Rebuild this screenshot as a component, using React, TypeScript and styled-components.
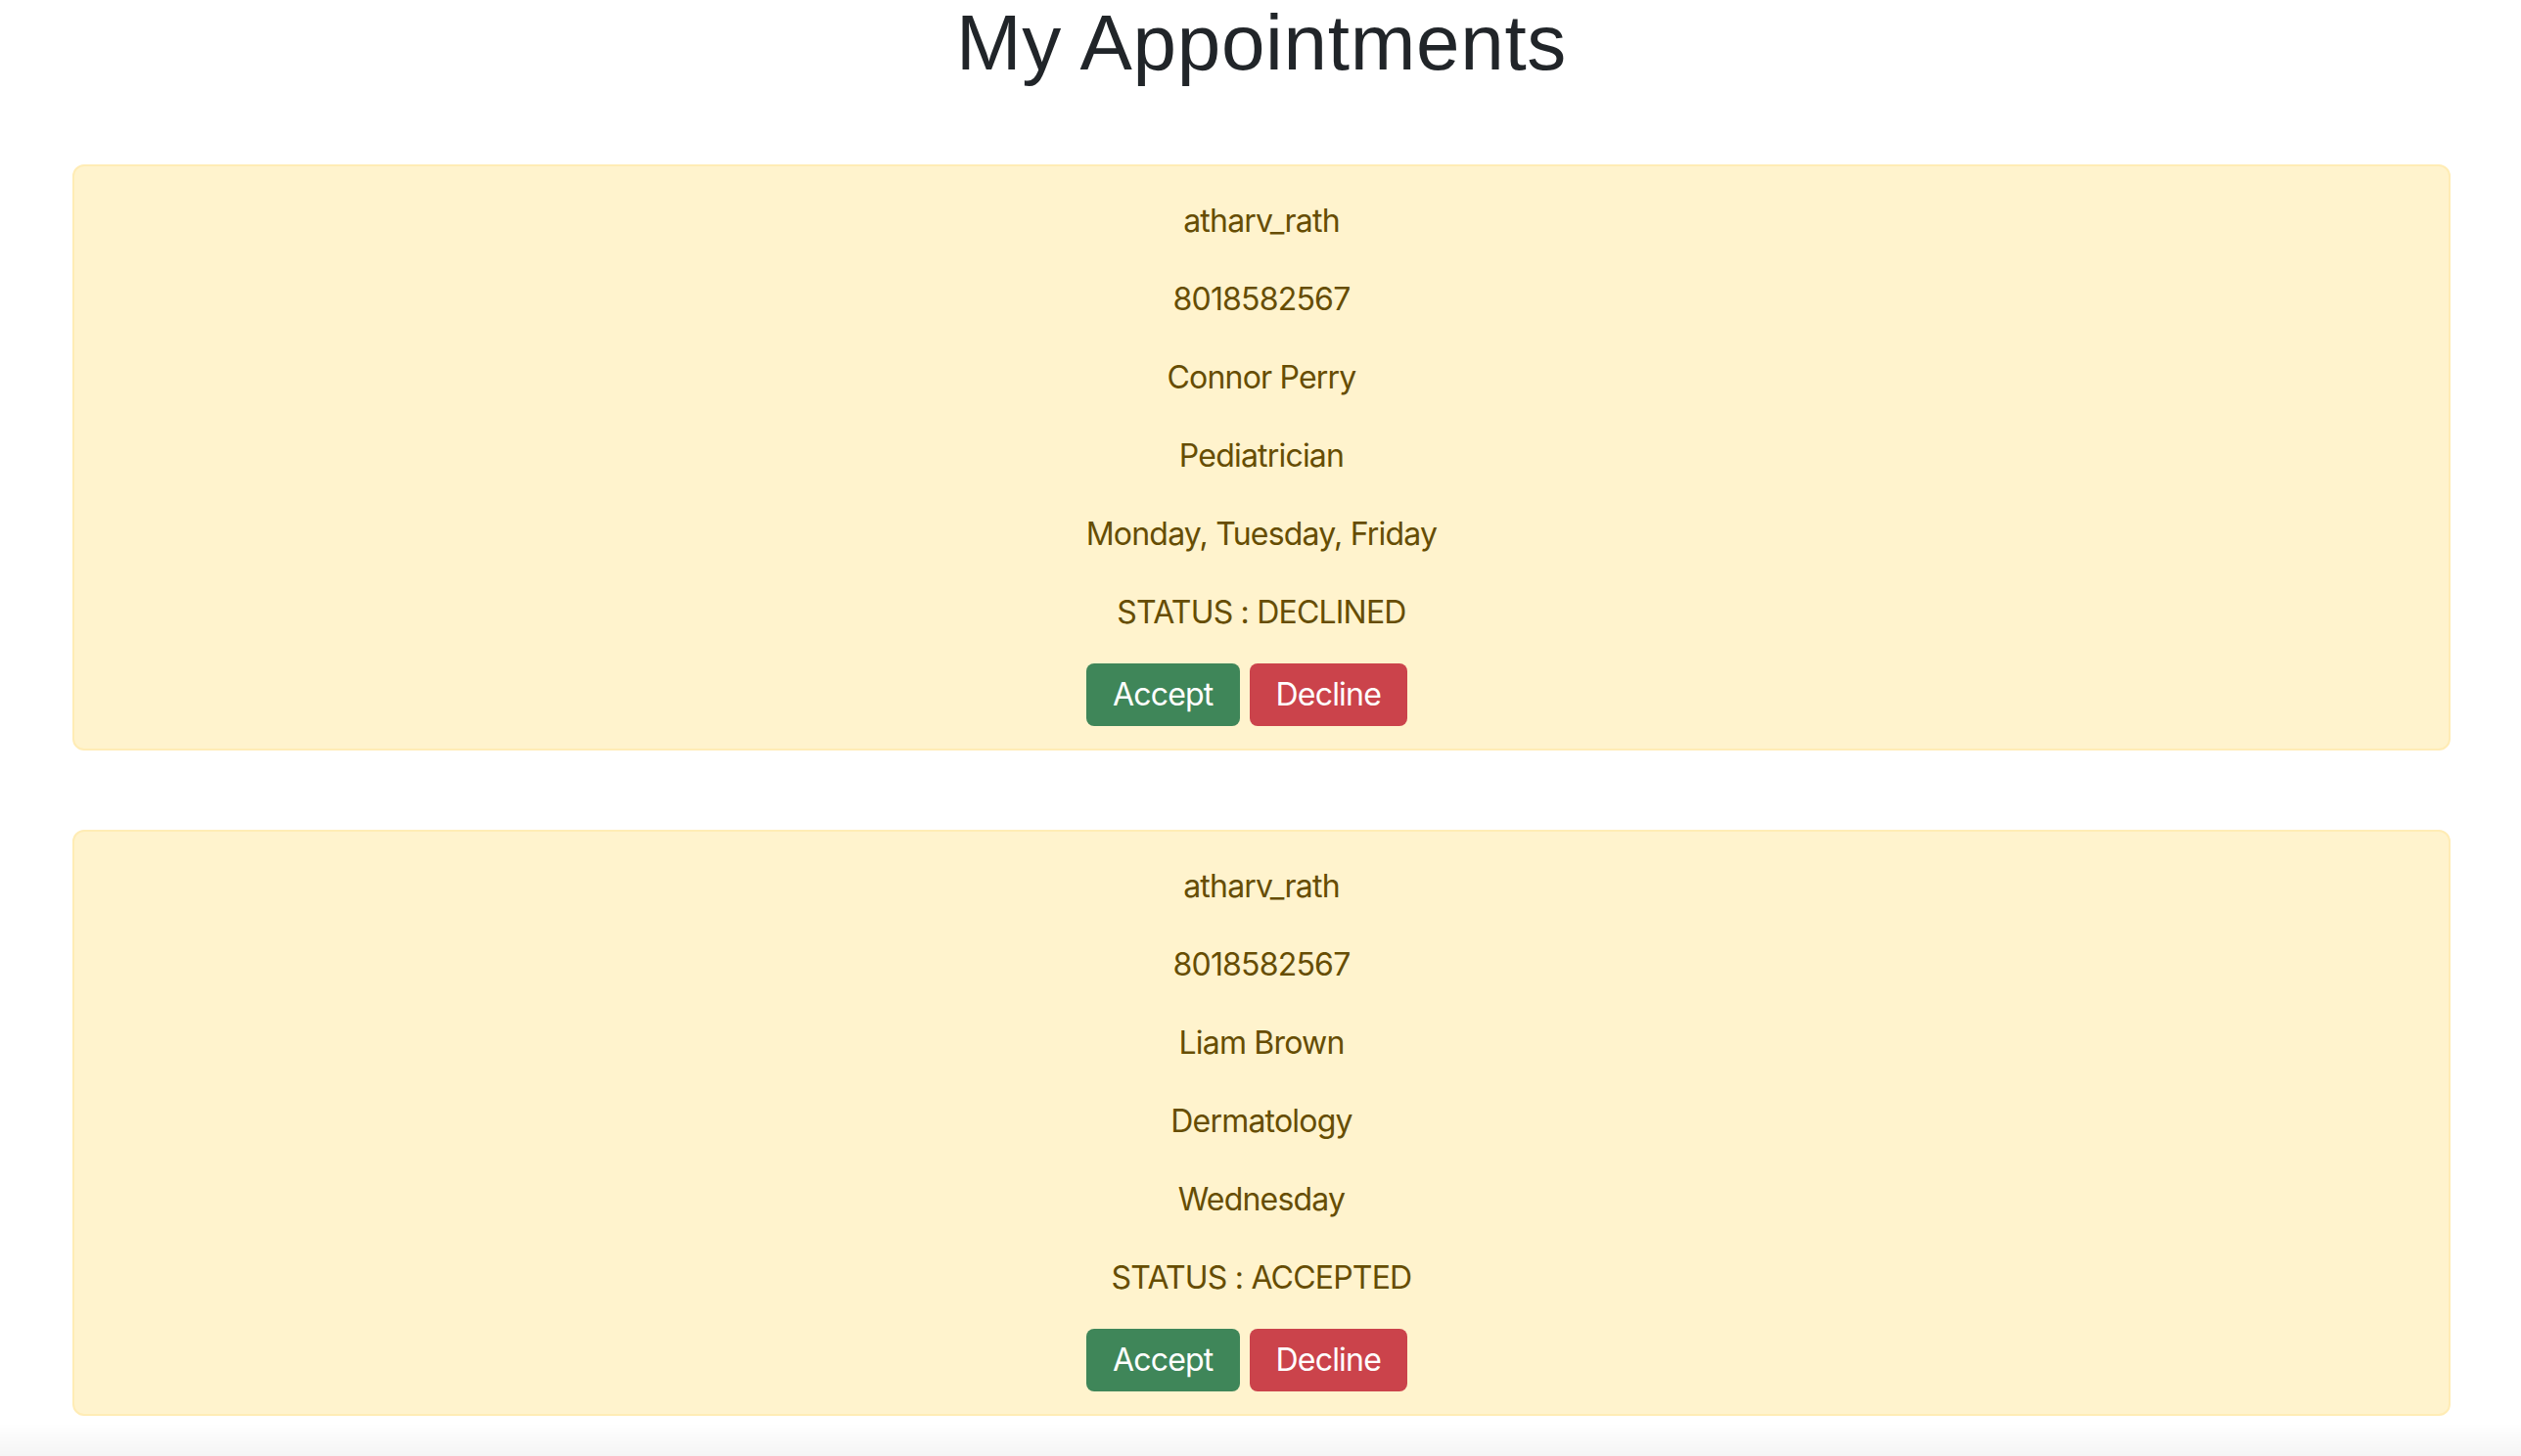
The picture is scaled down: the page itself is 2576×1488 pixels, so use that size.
import React from "react";
import styled, { createGlobalStyle } from "styled-components";

const GlobalStyle = createGlobalStyle`
  html, body {
    margin: 0;
    padding: 0;
    background: #ffffff;
  }
  body {
    font-family: Inter, "Noto Sans", "Liberation Sans", sans-serif;
    color: #212529;
  }
  * { box-sizing: border-box; }
`;

const Page = styled.main`
  display: flex;
  flex-direction: column;
  padding: 0 72px 0 74px;
  min-height: 1488px;
`;

const Title = styled.h1`
  margin: 0 0 80px;
  text-align: center;
  font-family: "Liberation Sans", Arial, sans-serif;
  font-weight: 400;
  font-size: 80px;
  line-height: 88px;
  letter-spacing: 0.7px;
  color: #212529;
`;

const CardList = styled.div`
  display: flex;
  flex-direction: column;
  gap: 81px;
`;

const Card = styled.section`
  display: flex;
  flex-direction: column;
  align-items: center;
  padding: 32px 32px 23px;
  background: #fff3cd;
  border: 2px solid #ffecb5;
  border-radius: 12px;
  color: #664d03;
`;

const Fields = styled.div`
  display: flex;
  flex-direction: column;
  align-items: center;
  gap: 32px;
`;

const Field = styled.p`
  margin: 0;
  font-size: 32px;
  line-height: 48px;
  letter-spacing: -0.8px;
  text-align: center;
`;

const ButtonRow = styled.div`
  display: flex;
  gap: 10px;
  margin: 28px 30px 0 0;
`;

const ActionButton = styled.button<{ $variant: "accept" | "decline" }>`
  height: 64px;
  padding: 0 27px;
  border: none;
  border-radius: 8px;
  font-family: Inter, "Noto Sans", sans-serif;
  font-size: 32px;
  line-height: 48px;
  letter-spacing: -0.8px;
  color: #ffffff;
  cursor: pointer;
  background: ${(p) => (p.$variant === "accept" ? "#3f8659" : "#cb434b")};
`;

const BottomFade = styled.div`
  position: fixed;
  left: 0;
  right: 0;
  bottom: 0;
  height: 34px;
  pointer-events: none;
  background: linear-gradient(to bottom, rgba(0, 0, 0, 0), rgba(0, 0, 0, 0.04));
`;

type Appointment = {
  user: string;
  phone: string;
  doctor: string;
  speciality: string;
  days: string;
  status: string;
};

const appointments: Appointment[] = [
  {
    user: "atharv_rath",
    phone: "8018582567",
    doctor: "Connor Perry",
    speciality: "Pediatrician",
    days: "Monday, Tuesday, Friday",
    status: "DECLINED",
  },
  {
    user: "atharv_rath",
    phone: "8018582567",
    doctor: "Liam Brown",
    speciality: "Dermatology",
    days: "Wednesday",
    status: "ACCEPTED",
  },
];

export default function App() {
  return (
    <>
      <GlobalStyle />
      <Page>
        <Title>My Appointments</Title>
        <CardList>
          {appointments.map((a, i) => (
            <Card key={i}>
              <Fields>
                <Field>{a.user}</Field>
                <Field>{a.phone}</Field>
                <Field>{a.doctor}</Field>
                <Field>{a.speciality}</Field>
                <Field>{a.days}</Field>
                <Field>STATUS : {a.status}</Field>
              </Fields>
              <ButtonRow>
                <ActionButton $variant="accept">Accept</ActionButton>
                <ActionButton $variant="decline">Decline</ActionButton>
              </ButtonRow>
            </Card>
          ))}
        </CardList>
      </Page>
      <BottomFade />
    </>
  );
}
